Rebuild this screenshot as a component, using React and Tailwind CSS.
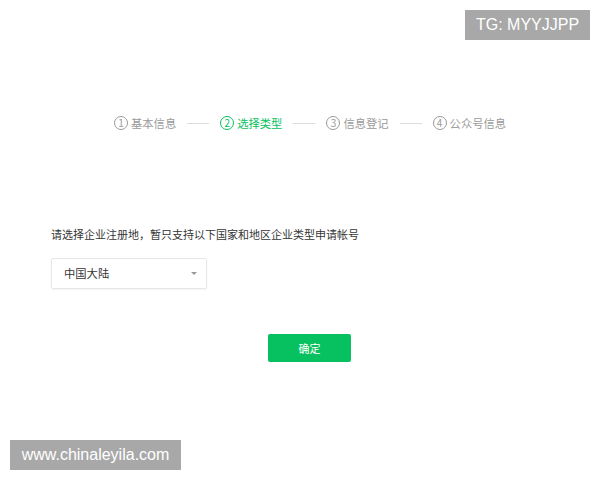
import React from 'react';

const steps = [
    { n: '1', label: '基本信息' },
    { n: '2', label: '选择类型', active: true },
    { n: '3', label: '信息登记' },
    { n: '4', label: '公众号信息' },
];

function Step({ n, label, active }) {
    const color = active ? 'text-[#07c160] border-[#07c160]' : 'text-[#9a9a9a] border-[#9a9a9a]';
    return (
        <div className={`flex items-center gap-[3px] ${active ? 'text-[#07c160]' : 'text-[#9a9a9a]'}`}>
            <span className={`w-[14px] h-[14px] rounded-full border flex items-center justify-center text-[10px] leading-none ${color}`}>
                {n}
            </span>
            <span className="text-[11.3px]">{label}</span>
        </div>
    );
}

export default function App() {
    return (
        <div
            className="relative w-[600px] h-[480px] bg-white overflow-hidden"
            style={{ fontFamily: '"Noto Sans CJK SC", "Liberation Sans", sans-serif' }}
        >
            {/* top-right tag */}
            <div className="absolute top-[10px] right-[10px] w-[125px] h-[30px] bg-[#a8a8a8] text-white text-[16px] flex items-center justify-center" style={{ fontFamily: '"Liberation Sans", sans-serif' }}>
                TG: MYYJJPP
            </div>

            <div className="pt-[115px] pl-[114px] flex items-center">
                {steps.map((s, i) => (
                    <React.Fragment key={s.n}>
                        {i > 0 && <div className="w-[22px] h-px bg-[#dddddd] mx-[11px]" />}
                        <Step {...s} />
                    </React.Fragment>
                ))}
            </div>

            <div className="pl-[51px] pt-[93px]">
                <p className="text-[11px] text-[#353535] leading-[18px]">请选择企业注册地，暂只支持以下国家和地区企业类型申请帐号</p>
                <div className="mt-[15px] w-[156px] h-[31px] border border-[#e7e7e7] rounded-[2px] shadow-[0_1px_2px_rgba(0,0,0,0.05)] flex items-center justify-between pl-[12px] pr-[9px]">
                    <span className="text-[11.3px] text-[#353535]">中国大陆</span>
                    <span className="w-0 h-0 border-x-[3px] border-x-transparent border-t-[3px] border-t-[#9a9a9a]" />
                </div>
            </div>

            <div className="flex pl-[268px] pt-[45px]">
                <button className="w-[83px] h-[28px] rounded-[2px] bg-[#07c160] text-white text-[11px]">确定</button>
            </div>

            {/* bottom-left site tag */}
            <div className="absolute left-[10px] top-[440px] w-[171px] h-[30px] bg-[#a8a8a8] text-white text-[16px] flex items-center justify-center" style={{ fontFamily: '"Liberation Sans", sans-serif' }}>
                www.chinaleyila.com
            </div>
        </div>
    );
}
